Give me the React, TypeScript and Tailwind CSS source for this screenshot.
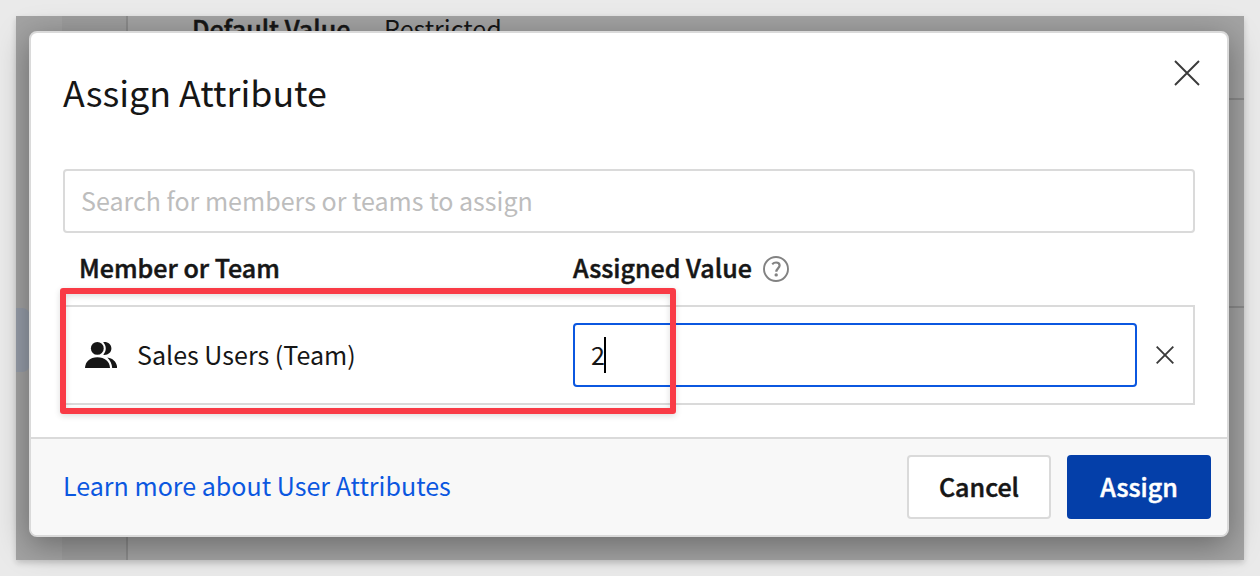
import React from 'react';

const PeopleIcon = () => (
  <svg className="block h-[26px] w-8" viewBox="0 0 32 26" fill="#161616">
    <circle cx="12.3" cy="6.4" r="6.4" />
    <path d="M0 26C.3 19.500 5 15.200 12.400 15.200S24.700 19.500 25 26Z" />
    <path d="M18.200.2c4.500-.6 8.200 2.200 8.200 6.300s-3.700 6.900-8.200 6.300c3.400-3.600 3.400-9 0-12.600Z" />
    <path d="M22.300 15.600c6 .8 9.600 4.900 9.900 10.400h-5c-.3-4-2-7.700-4.900-10.400Z" />
  </svg>
);

const Cross = ({ className, width }: { className: string; width: number }) => (
  <svg className={className} viewBox="0 0 26 26" fill="none" stroke="#3a3a3a" strokeWidth={width}>
    <path d="M1 1 25 25M25 1 1 25" />
  </svg>
);

const HelpIcon = () => (
  <svg className="block size-[26px]" viewBox="0 0 26 26" fill="none" stroke="#828282" strokeWidth="1.9">
    <circle cx="13" cy="13" r="12" />
    <path strokeWidth="2.2" d="M9.200 8.200c1.200-1.200 2.400-1.700 3.900-1.700 2.100 0 3.500 1.200 3.500 3.100 0 2.500-3.500 3.200-3.300 6.200" />
    <circle cx="13.200" cy="18.900" r="1.700" fill="#828282" stroke="none" />
  </svg>
);

export default function App() {
  return (
    <div className="h-[576px] w-[1260px] overflow-hidden bg-[#eaeaea] p-4 font-['Noto_Sans_CJK_SC',sans-serif] text-[25.05px] leading-8 text-[#161616]">
      <div className="relative h-[544px] w-[1228px] shadow-[0_3px_6px_rgba(0,0,0,0.16)]">
        <div className="flex h-full overflow-hidden bg-[#a3a3a3]">
          <div className="w-[46px] pt-[292px]">
            <div className="h-16 w-[14px] rounded-r-lg bg-[#969da9]" />
          </div>
          <div className="w-[66px] border-r-2 border-[#8b8b8b] bg-[#9d9d9d]" />
          <div className="flex flex-1 flex-col">
            <div className="flex h-[84px] border-b-2 border-[#8b8b8b] pl-16">
              <span className="-mt-1 w-[192px] font-medium [-webkit-text-stroke:0.5px]">Default Value</span>
              <span className="-mt-1">Restricted</span>
            </div>
            <div className="h-[208px] border-b-2 border-[#8b8b8b]" />
          </div>
        </div>
        <div
          role="dialog"
          className="absolute left-[13px] top-[15px] flex h-[506px] w-[1200px] flex-col overflow-hidden rounded-lg border-2 border-[#dadada] bg-white shadow-[0_8px_32px_rgba(0,0,0,0.36)]"
        >
          <div className="flex h-[136px] items-start justify-between pl-8 pr-[27px] pt-[27px]">
            <h1 className="mt-1.5 text-[35.8px] leading-[50px]">Assign Attribute</h1>
            <button aria-label="Close">
              <Cross className="block size-[26px]" width={1.9} />
            </button>
          </div>
          <div className="mx-8 flex h-16 shrink-0 items-center rounded border-2 border-[#dadada] px-4 pb-0.5 text-[#bdbdbd]">
            Search for members or teams to assign
          </div>
          <div className="mx-8 flex h-[72px] shrink-0 items-center pl-4 font-medium">
            <span className="w-[494px] pb-1 [-webkit-text-stroke:0.5px]">Member or Team</span>
            <span className="mr-[11px] pb-1 [-webkit-text-stroke:0.5px]">Assigned Value</span>
            <HelpIcon />
          </div>
          <div className="relative mx-8 flex h-[100px] shrink-0 items-center border-2 border-[#dadada]">
            <div className="flex w-[508px] items-center gap-5 pl-5">
              <PeopleIcon />
              <span className="pb-0.5">Sales Users (Team)</span>
            </div>
            <div className="flex h-16 w-[564px] items-center rounded border-2 border-[#0b57e0] pl-4">
              <span className="pb-0.5">2</span>
              <span className="-ml-px h-9 w-0.5 bg-black" />
            </div>
            <button className="ml-[19px]" aria-label="Remove">
              <Cross className="block size-[18px]" width={2.7} />
            </button>
            <div className="absolute -left-[5px] -top-[19px] h-[126px] w-[616px] rounded-[3px] border-[6px] border-[#f93b46] shadow-[0_2px_6px_rgba(0,0,0,0.14),inset_0_2px_6px_rgba(0,0,0,0.14)]" />
          </div>
          <div className="mt-8 flex h-[98px] shrink-0 items-center border-t-2 border-[#dadada] bg-[#f8f8f8] pl-8 pr-4">
            <a className="flex-1 pb-1 text-[#0b57e0]">Learn more about User Attributes</a>
            <button className="mr-4 h-16 w-36 rounded border-2 border-[#dadada] bg-white pb-0.5 font-medium [-webkit-text-stroke:0.5px]">Cancel</button>
            <button className="h-16 w-36 rounded bg-[#043fa9] pb-0.5 font-medium text-white [-webkit-text-stroke:0.5px]">Assign</button>
          </div>
        </div>
      </div>
    </div>
  );
}
